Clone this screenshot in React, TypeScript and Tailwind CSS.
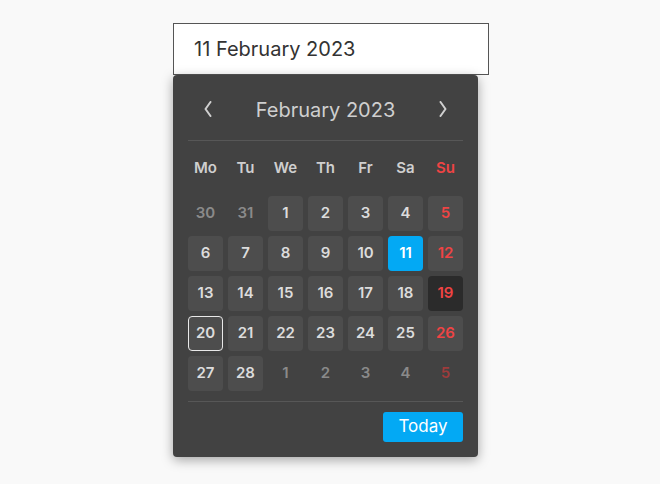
import React from "react";

type Day = {
  n: number;
  kind: "prev" | "cur" | "next";
  sun?: boolean;
  selected?: boolean;
  today?: boolean;
  focus?: boolean;
};

const weekdays = ["Mo", "Tu", "We", "Th", "Fr", "Sa", "Su"];

function buildDays(): Day[] {
  const days: Day[] = [
    { n: 30, kind: "prev" },
    { n: 31, kind: "prev" },
  ];
  for (let i = 1; i <= 28; i++) {
    days.push({
      n: i,
      kind: "cur",
      sun: (i + 2) % 7 === 0,
      selected: i === 11,
      today: i === 19,
      focus: i === 20,
    });
  }
  for (let i = 1; i <= 5; i++) {
    days.push({ n: i, kind: "next", sun: i === 5 });
  }
  return days;
}

function Chevron({ dir }: { dir: "left" | "right" }) {
  return (
    <svg width="8" height="16" viewBox="0 0 8 16" fill="none">
      <path
        d={dir === "left" ? "M6.5 1 L1.5 8 L6.5 15" : "M1.5 1 L6.5 8 L1.5 15"}
        stroke="#d0d0d0"
        strokeWidth="2"
        strokeLinecap="round"
        strokeLinejoin="round"
      />
    </svg>
  );
}

function DayCell({ d }: { d: Day }) {
  if (d.kind !== "cur") {
    return (
      <div
        className={`h-[35px] flex items-center justify-center text-[15px] font-semibold ${
          d.sun ? "text-[#9e3b3b]" : "text-[#8a8a8a]"
        }`}
      >
        {d.n}
      </div>
    );
  }
  let cls = "bg-[#4d4d4d] text-[#dcdcdc]";
  if (d.sun) cls = "bg-[#4d4d4d] text-[#ef4444]";
  if (d.selected) cls = "bg-[#03a9f4] text-white";
  if (d.today) cls = "bg-[#2b2b2b] text-[#ef4444]";
  return (
    <div
      className={`h-[35px] rounded-[4px] flex items-center justify-center text-[15px] font-semibold ${cls} ${
        d.focus ? "border border-[#e8e8e8]" : ""
      }`}
    >
      {d.n}
    </div>
  );
}

export default function App() {
  const days = buildDays();
  return (
    <div className="min-h-screen w-full bg-[#f9f9f9] font-['Inter',sans-serif] pl-[173px] pt-[23px]">
      <div className="w-[316px]">
        {/* Input */}
        <div className="h-[52px] bg-white border border-[#555] flex items-center pl-[20px] text-[20px] text-[#333]">
          11 February 2023
        </div>

        {/* Calendar popover */}
        <div className="w-[305px] bg-[#424242] rounded-[4px] shadow-[0_3px_12px_rgba(0,0,0,0.35)] px-[15px] pt-[20px] pb-[15px]">
          {/* Header */}
          <div className="h-[30px] flex items-center justify-between text-[#cfcfcf]">
            <div className="w-[40px] flex justify-center -mt-[3px]">
              <Chevron dir="left" />
            </div>
            <div className="text-[20px]">February 2023</div>
            <div className="w-[40px] flex justify-center -mt-[3px]">
              <Chevron dir="right" />
            </div>
          </div>
          <div className="mt-[15px] h-px bg-[#575757]" />

          {/* Weekdays */}
          <div className="mt-[12px] h-[30px] grid grid-cols-7 gap-x-[5px]">
            {weekdays.map((w) => (
              <div
                key={w}
                className={`flex items-center justify-center text-[15px] font-semibold ${
                  w === "Su" ? "text-[#ef4444]" : "text-[#cfcfcf]"
                }`}
              >
                {w}
              </div>
            ))}
          </div>

          {/* Days */}
          <div className="mt-[13px] grid grid-cols-7 gap-[5px]">
            {days.map((d, i) => (
              <DayCell key={i} d={d} />
            ))}
          </div>

          <div className="mt-[10px] h-px bg-[#575757]" />

          <div className="mt-[10px] flex justify-end">
            <button className="w-[80px] h-[30px] rounded-[3px] bg-[#03a9f4] text-white text-[17px]">
              Today
            </button>
          </div>
        </div>
      </div>
    </div>
  );
}
